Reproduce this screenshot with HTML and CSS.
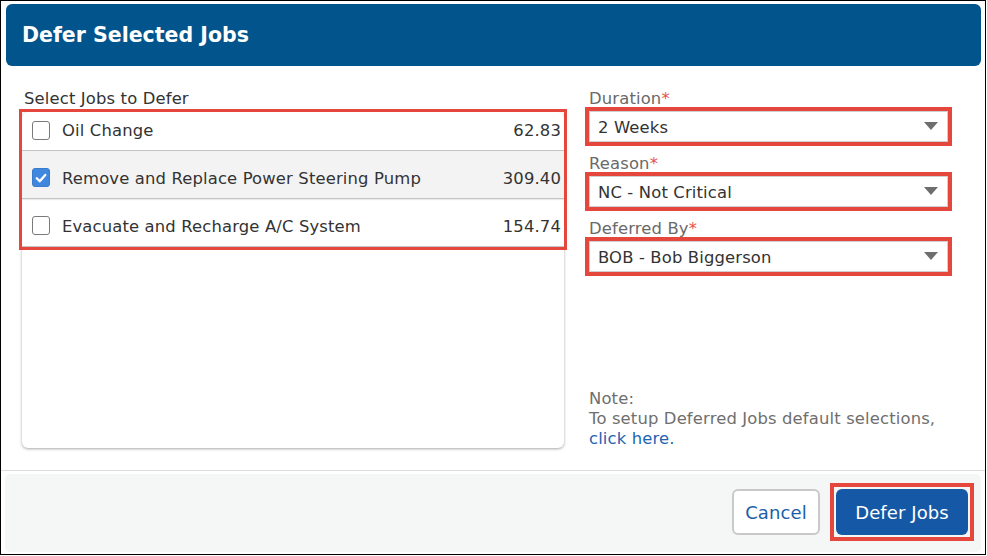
FILE: index.html
```html
<!DOCTYPE html>
<html lang="en">
<head>
<meta charset="utf-8">
<title>Defer Selected Jobs</title>
<link rel="stylesheet" href="styles.css">
</head>
<body>
<div class="frame">
  <div class="header"><h1 class="title">Defer Selected Jobs</h1></div>
  <div class="content">
    <div class="left-col">
      <div class="section-label">Select Jobs to Defer</div>
      <div class="card">
        <div class="rows">
          <div class="job-row first">
            <span class="checkbox"></span>
            <span class="job-name">Oil Change</span>
            <span class="job-amount">62.83</span>
          </div>
          <div class="job-row selected">
            <span class="checkbox checked"><svg viewBox="0 0 18 18" width="18" height="18"><path d="M4.2 9.3 L7.6 12.6 L13.8 5.6" fill="none" stroke="#fff" stroke-width="2.6" stroke-linecap="round" stroke-linejoin="round"/></svg></span>
            <span class="job-name">Remove and Replace Power Steering Pump</span>
            <span class="job-amount">309.40</span>
          </div>
          <div class="job-row">
            <span class="checkbox"></span>
            <span class="job-name">Evacuate and Recharge A/C System</span>
            <span class="job-amount">154.74</span>
          </div>
        </div>
      </div>
    </div>
    <div class="right-col">
      <div class="field">
        <div class="field-label">Duration<span class="req">*</span></div>
        <div class="select"><span class="select-value">2 Weeks</span><svg class="caret" viewBox="0 0 14 8" width="14" height="8"><polygon points="0,0 14,0 7,8" fill="#6e6e6e"/></svg></div>
      </div>
      <div class="field">
        <div class="field-label">Reason<span class="req">*</span></div>
        <div class="select"><span class="select-value">NC - Not Critical</span><svg class="caret" viewBox="0 0 14 8" width="14" height="8"><polygon points="0,0 14,0 7,8" fill="#6e6e6e"/></svg></div>
      </div>
      <div class="field">
        <div class="field-label">Deferred By<span class="req">*</span></div>
        <div class="select"><span class="select-value">BOB - Bob Biggerson</span><svg class="caret" viewBox="0 0 14 8" width="14" height="8"><polygon points="0,0 14,0 7,8" fill="#6e6e6e"/></svg></div>
      </div>
      <div class="note">
        <div>Note:</div>
        <div>To setup Deferred Jobs default selections,</div>
        <a class="note-link" href="#">click here.</a>
      </div>
    </div>
  </div>
  <div class="separator"></div>
  <div class="footer">
    <button class="btn btn-cancel">Cancel</button>
    <span class="highlight"><button class="btn btn-primary">Defer Jobs</button></span>
  </div>
</div>
</body>
</html>
```
FILE: styles.css
```css
* { box-sizing: border-box; }
html, body { margin: 0; padding: 0; background: #fff; }
body { font-family: "DejaVu Sans", Verdana, sans-serif; font-size: 16.4px; letter-spacing: 0.15px; color: #333; }

.frame {
  width: 986px;
  height: 555px;
  border: 1px solid #000;
  display: flex;
  flex-direction: column;
  background: #fff;
}

.header {
  margin: 3px 4px 0 5px;
  height: 62px;
  background: #02548c;
  border-radius: 6px;
  display: flex;
  align-items: center;
  padding-left: 16px;
}
.title {
  margin: 0;
  color: #fff;
  font-size: 20.5px;
  font-weight: bold;
  letter-spacing: 0;
}

.content {
  height: 404px;
  display: flex;
  padding: 23px 0 22px 21px;
  gap: 25px;
}

.left-col {
  width: 542px;
  display: flex;
  flex-direction: column;
}
.section-label {
  line-height: 20px;
  padding-left: 2px;
  margin-bottom: 3px;
  color: #333;
}
.card {
  flex: 1;
  background: #fff;
  border-radius: 6px;
  box-shadow: 0 1px 3px rgba(0,0,0,0.35);
}
.rows {
  outline: 3px solid #e5473d;
}
.job-row {
  height: 48px;
  padding: 7px 3px 0 10px;
  display: flex;
  align-items: center;
  border-bottom: 1px solid #c4c4c4;
  box-shadow: 0 1px 1px rgba(0,0,0,0.08);
  color: #333;
}
.job-row.first {
  height: 39px;
  padding-top: 1px;
  padding-bottom: 2px;
}
.job-row.selected { background: #f3f3f3; }
.checkbox {
  width: 18px;
  height: 19px;
  border: 1.5px solid #7a7a7a;
  border-radius: 3px;
  background: #fff;
  flex: none;
  display: flex;
  align-items: center;
  justify-content: center;
  margin-top: -1px;
}
.checkbox.checked {
  background: #3f88de;
  border-color: #3a7ccc;
}
.checkbox svg { display: block; }
.job-name { margin-left: 12px; flex: 1; }
.job-amount { text-align: right; }

.right-col {
  width: 359px;
  display: flex;
  flex-direction: column;
}
.field { margin-bottom: 12px; }
.field-label {
  line-height: 20px;
  color: #6a6a6a;
}
.req { color: #e5534b; }
.select {
  margin-top: 2px;
  height: 31px;
  border: 1px solid #cfcfcf;
  background: #fff;
  display: flex;
  align-items: center;
  padding: 1px 9px 0 8px;
  outline: 4px solid #e5473d;
  color: #333;
}
.select-value { flex: 1; }
.caret { display: block; margin-top: -3px; }

.note {
  margin-top: auto;
  margin-bottom: -1px;
  line-height: 20px;
  color: #6f6f6f;
}
.note-link {
  color: #1f64b1;
  text-decoration: none;
}

.separator {
  height: 1px;
  background: #dedede;
}
.footer {
  margin: 3px 4px 2px 4px;
  height: 78px;
  background: #f5f6f6;
  border-radius: 5px;
  display: flex;
  justify-content: flex-end;
  align-items: flex-start;
  padding: 9px 7px 0 0;
  gap: 10px;
}
.btn-cancel { margin-top: 6px; }
.highlight {
  display: block;
  border: 4px solid #e5473d;
  padding: 2px;
}
.btn {
  display: block;
  height: 46px;
  border-radius: 6px;
  font-family: "DejaVu Sans", Verdana, sans-serif;
  font-size: 18px;
  letter-spacing: 0.1px;
  cursor: pointer;
  padding: 0;
}
.btn-cancel {
  width: 88px;
  background: #fff;
  border: 2px solid #c9c9c9;
  color: #1c5ea6;
}
.btn-primary {
  width: 132px;
  background: #1559a6;
  border: none;
  color: #fff;
}
```
